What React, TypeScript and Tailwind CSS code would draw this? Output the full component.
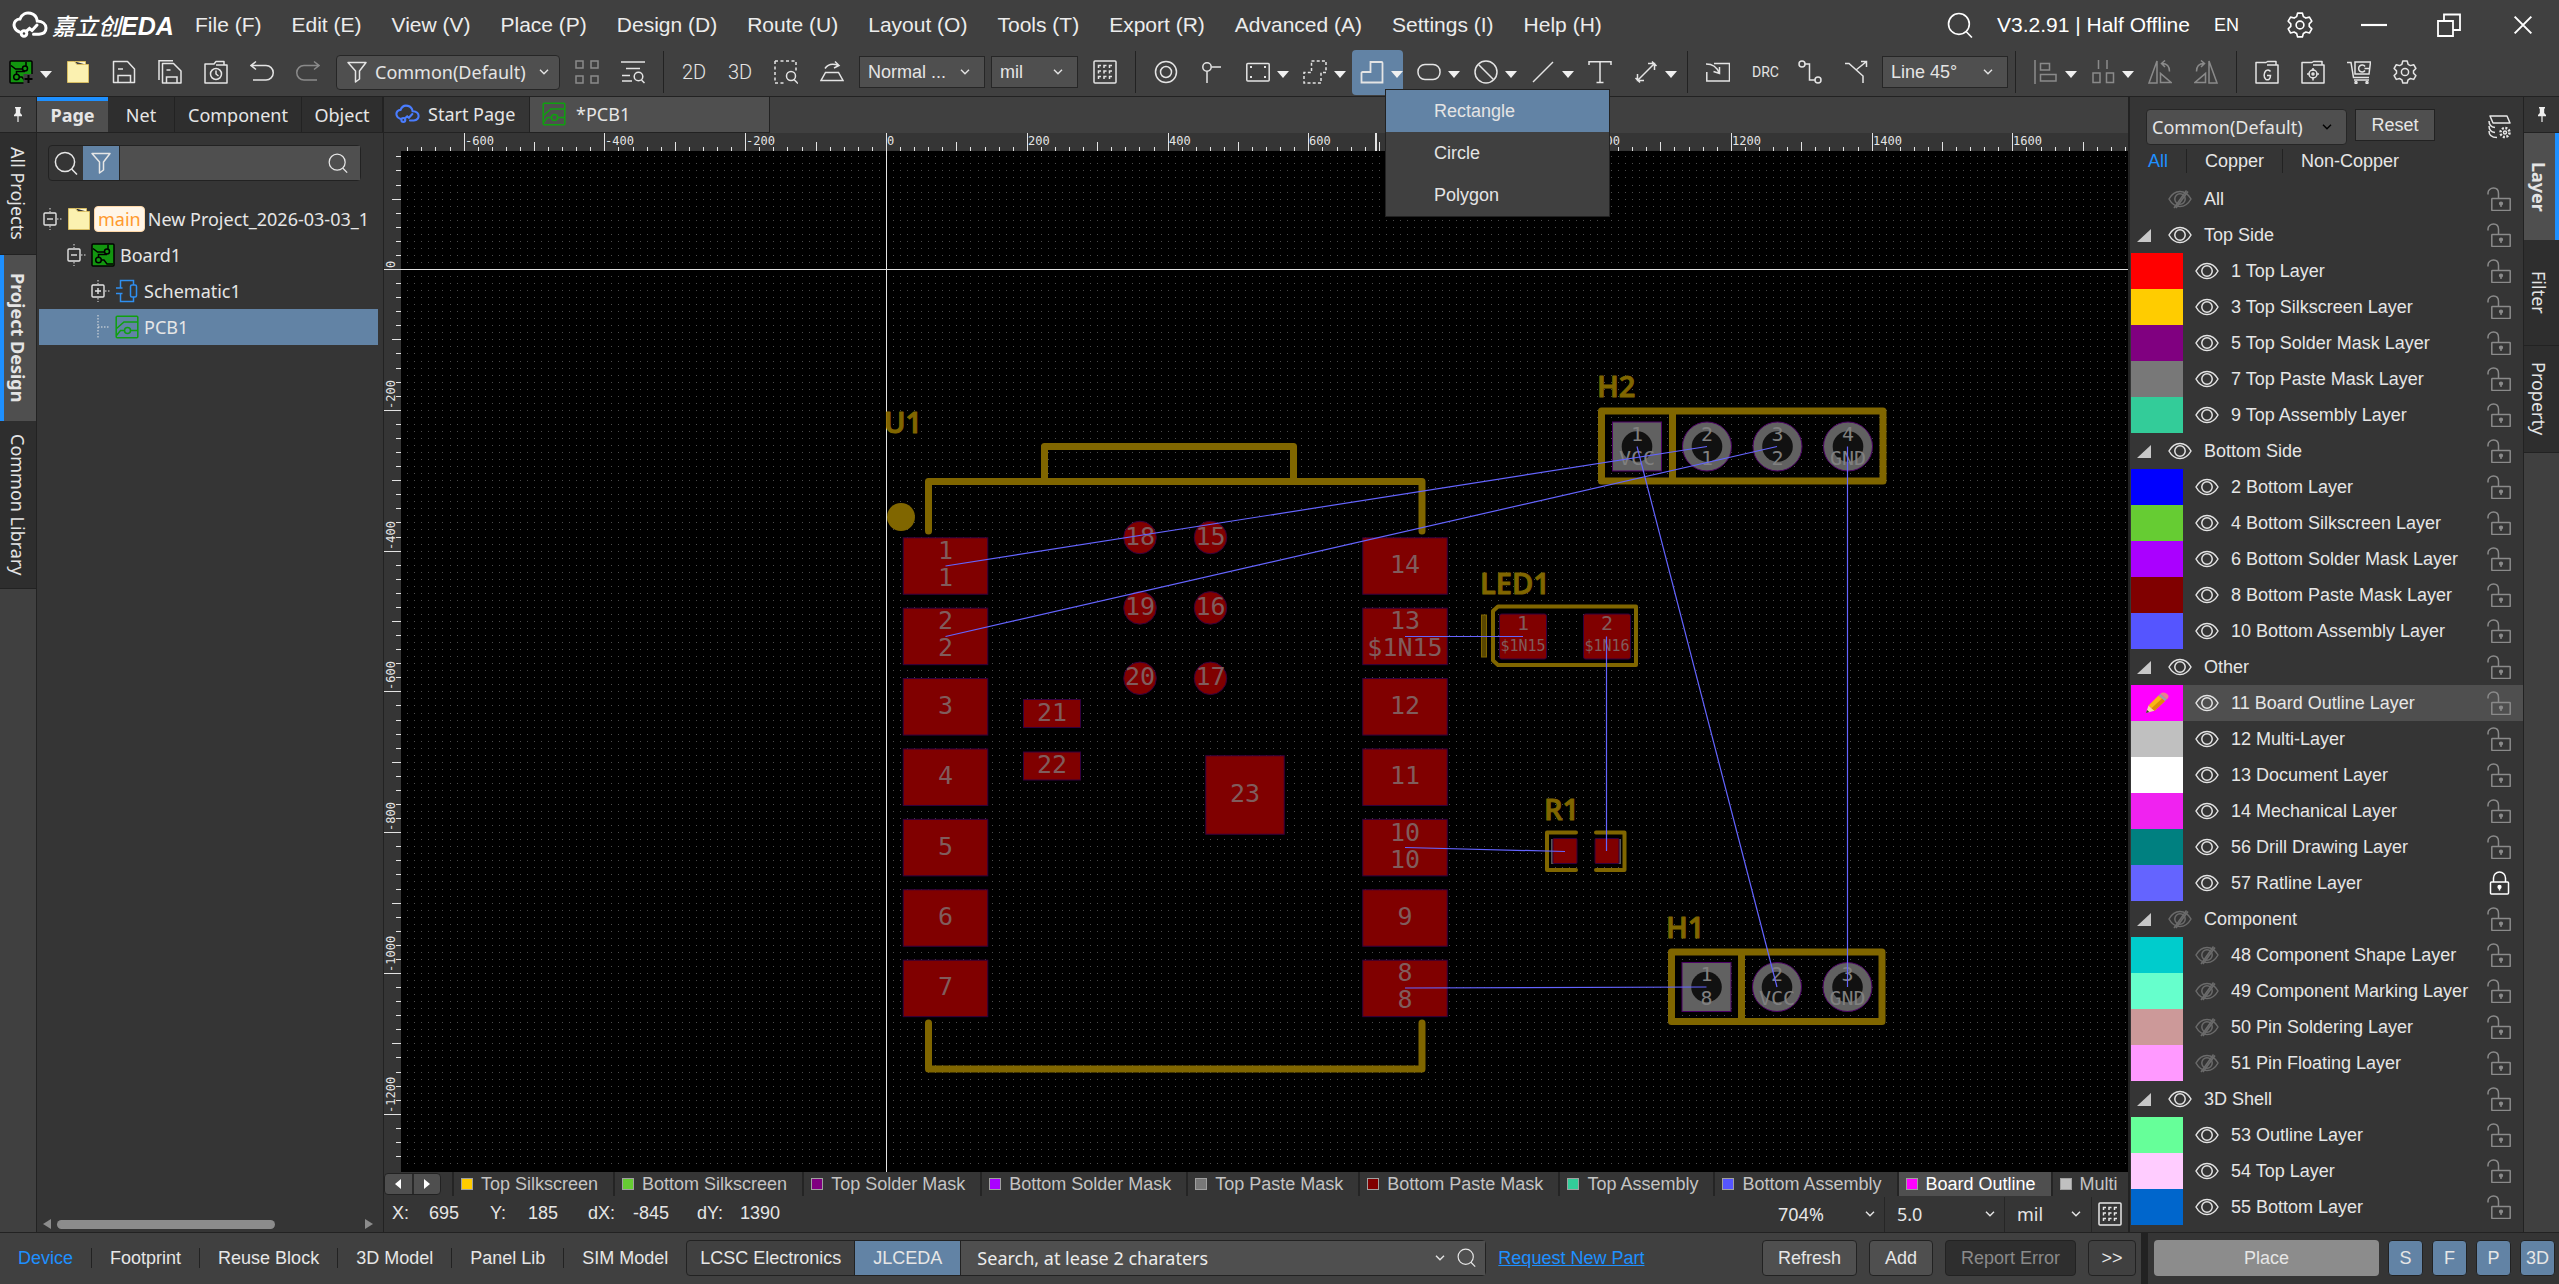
import { useState, type ReactNode } from 'react';
import { clsx, type ClassValue } from 'clsx';
import { twMerge } from 'tailwind-merge';

function cn(...inputs: ClassValue[]) {
  return twMerge(clsx(inputs));
}

const MENUS = [
  'File (F)', 'Edit (E)', 'View (V)', 'Place (P)', 'Design (D)', 'Route (U)', 'Layout (O)',
  'Tools (T)', 'Export (R)', 'Advanced (A)', 'Settings (I)', 'Help (H)',
];

type Layer = {
  name: string;
  color?: string;
  hidden?: boolean;
  locked?: boolean;
  active?: boolean;
  plain?: boolean;
};

const LAYERS: Layer[] = [
  { name: 'All', hidden: true, plain: true },
  { name: 'Top Side' },
  { name: '1 Top Layer', color: '#ff0000' },
  { name: '3 Top Silkscreen Layer', color: '#ffcc00' },
  { name: '5 Top Solder Mask Layer', color: '#800080' },
  { name: '7 Top Paste Mask Layer', color: '#787878' },
  { name: '9 Top Assembly Layer', color: '#33cc99' },
  { name: 'Bottom Side' },
  { name: '2 Bottom Layer', color: '#0000ff' },
  { name: '4 Bottom Silkscreen Layer', color: '#66cc33' },
  { name: '6 Bottom Solder Mask Layer', color: '#aa00ff' },
  { name: '8 Bottom Paste Mask Layer', color: '#800000' },
  { name: '10 Bottom Assembly Layer', color: '#5555ff' },
  { name: 'Other' },
  { name: '11 Board Outline Layer', color: '#ff00ff', active: true },
  { name: '12 Multi-Layer', color: '#c0c0c0' },
  { name: '13 Document Layer', color: '#ffffff' },
  { name: '14 Mechanical Layer', color: '#f022f0' },
  { name: '56 Drill Drawing Layer', color: '#008080' },
  { name: '57 Ratline Layer', color: '#6464ff', locked: true },
  { name: 'Component', hidden: true },
  { name: '48 Component Shape Layer', color: '#00cccc', hidden: true },
  { name: '49 Component Marking Layer', color: '#66ffcc', hidden: true },
  { name: '50 Pin Soldering Layer', color: '#cc9999', hidden: true },
  { name: '51 Pin Floating Layer', color: '#ff99ff', hidden: true },
  { name: '3D Shell' },
  { name: '53 Outline Layer', color: '#66ff99' },
  { name: '54 Top Layer', color: '#ffccff' },
  { name: '55 Bottom Layer', color: '#0066cc' },
];

const LAYER_TABS = [
  ['Top Silkscreen', '#ffcc00'],
  ['Bottom Silkscreen', '#66cc33'],
  ['Top Solder Mask', '#800080'],
  ['Bottom Solder Mask', '#aa00ff'],
  ['Top Paste Mask', '#787878'],
  ['Bottom Paste Mask', '#800000'],
  ['Top Assembly', '#33cc99'],
  ['Bottom Assembly', '#5555ff'],
  ['Board Outline', '#ff00ff'],
  ['Multi', '#c0c0c0'],
];

/* ---------- icons ---------- */

function Icon({ children, className }: { children: ReactNode; className?: string }) {
  return (
    <svg
      viewBox="0 0 24 24"
      className={cn('w-6 h-6 shrink-0', className)}
      fill="none"
      stroke="currentColor"
      strokeWidth="1.5"
    >
      {children}
    </svg>
  );
}

const Chevron = ({ className }: { className?: string }) => (
  <svg viewBox="0 0 10 6" className={cn('w-[10px] h-[6px] shrink-0 pointer-events-none', className)} fill="none" stroke="currentColor" strokeWidth="1.4">
    <path d="M1 .8l4 4 4-4" />
  </svg>
);

const Caret = () => (
  <svg viewBox="0 0 12 7" className="w-3 h-[7px] mt-1 shrink-0" fill="#f0f0f0">
    <path d="M0 0h12L6 7z" />
  </svg>
);

const Search = ({ className }: { className?: string }) => (
  <Icon className={className}>
    <circle cx="11" cy="11" r="9.6" />
    <path d="M17.6 18L23 23.5" />
  </Icon>
);

const Funnel = ({ className }: { className?: string }) => (
  <Icon className={className}>
    <path d="M3 2.5h18l-6.500 8.500v8l-4 3V11z" strokeLinejoin="round" />
  </Icon>
);

const Eye = ({ off }: { off?: boolean }) => (
  <Icon className={off ? 'text-[#6b6b6b]' : 'text-[#e4e4e4]'}>
    <path d="M1 12C4 6.6 8 4.5 12 4.5s8 2.1 11 7.5c-3 5.4-7 7.5-11 7.5S4 17.4 1 12z" />
    <circle cx="12" cy="12" r="5.2" />
    {off && <path d="M18.5 3.5L6 21M20 4.5L8 21" />}
  </Icon>
);

const Lock = ({ closed }: { closed?: boolean }) => (
  <Icon className={closed ? 'text-white' : 'text-[#8a8a8a]'}>
    {closed ? (
      <>
        <rect x="3.5" y="11" width="18" height="12" rx="1" />
        <path d="M6.5 11V7a6 6 0 0 1 12 0v4" />
        <circle cx="12.5" cy="16" r="1.4" fill="currentColor" />
        <path d="M12.5 16v3.5" />
      </>
    ) : (
      <>
        <rect x="4.8" y="11.5" width="18.4" height="12" rx=".5" />
        <path d="M11.500 11V6.500C11.500 3 9.500 1 6.500 1S1 3.200 1 6v1.500" />
        <circle cx="14" cy="16.6" r="1.4" fill="currentColor" />
        <path d="M14 16.600v3.500" />
      </>
    )}
  </Icon>
);

const CloudLogo = ({ className, width = 3 }: { className?: string; width?: number }) => (
  <svg viewBox="0 0 36 27" className={className} fill="none" stroke="currentColor" strokeWidth={width} strokeLinecap="round">
    <path d="M7.5 20.5C2.5 19 .5 13 3.500 9.500c1.200-1.400 2.800-2 4.500-2C10 2.500 14.500.8 18.500 1.800c4.200 1 6.300 4 6.800 7.700 5 .3 8.700 3 8.700 7 0 4-3 6-7 6.300h-5.500" />
    <circle cx="12" cy="22" r="2.8" />
    <path d="M14 20l3.500-3 2.500 2 5-5.500" />
  </svg>
);

const Folder = () => (
  <Icon>
    <path d="M1.5 1.500h7l2.500 3h11.500v18h-21z" fill="#fbf1b0" stroke="#d8bd62" strokeWidth="1" />
    <path d="M9 1.500h10.500v3" fill="#fdf6cd" stroke="#d8bd62" strokeWidth="1" />
  </Icon>
);

const BoardIcon = ({ plus }: { plus?: boolean }) => (
  <Icon className="text-black">
    <rect x="1" y="1" width="22" height="22" rx="1" fill="#12960f" />
    <path d="M2 5.500l4.500 3.500h7" />
    <circle cx="16" cy="8.5" r="2.5" />
    <circle cx="7.5" cy="17" r="2.8" />
    <path d="M7.500 14v-2.500H16M17 2v4M10.500 17H13l3 4h6" />
    {plus && (
      <>
        <path d="M14.500 14h10v10h-10z" fill="#404040" stroke="none" />
        <path d="M19.500 15v8M15.500 19h8" stroke="#000" strokeWidth="2" />
      </>
    )}
  </Icon>
);

const PcbIcon = ({ className }: { className?: string }) => (
  <Icon className={cn('text-[#10a010]', className)}>
    <rect x="1.2" y="1.2" width="21.6" height="21.6" rx="1" />
    <path d="M1.500 13.500L9 7h13.500" />
    <circle cx="12.5" cy="15.5" r="3" />
    <path d="M15.500 15.500h7M1.500 20.500l4-5h4" />
  </Icon>
);

const SchIcon = () => (
  <Icon className="text-[#2f8ff0]">
    <path d="M5.500 9V1.500h13V6M5.500 15v7.500h13V18M1 9h6.500M1 14.500h6.500" />
    <rect x="15.5" y="6" width="6" height="12" rx="1.5" />
  </Icon>
);

const GridIcon = () => (
  <Icon>
    <rect x="1" y="1" width="22" height="22" rx="1" />
    <path d="M5.500 8V5.500h2.500M11 8V5.500h2.500M16.500 8V5.500H19M5.500 13.500V11h2.500M11 13.500V11h2.500M16.500 13.500V11H19M5.500 19v-2.500h2.500M11 19v-2.500h2.500M16.500 19v-2.500H19" />
  </Icon>
);

const Gear = ({ className }: { className?: string }) => (
  <Icon className={className}>
    <path d="M9.800 1h4.400l.9 3.300 2.300 1.300 3.300-.9 2.200 3.800-2.400 2.400v2.400l2.400 2.300-2.200 3.800-3.300-.9-2.300 1.300-.9 3.200H9.800l-.9-3.200-2.300-1.300-3.300.9-2.200-3.800 2.400-2.300v-2.400L1.100 8.500l2.200-3.800 3.300.9 2.300-1.300z" strokeLinejoin="round" />
    <circle cx="12" cy="12" r="3.6" />
  </Icon>
);

const Pin = () => (
  <svg viewBox="0 0 10 16" className="w-[10px] h-4" fill="#eee">
    <path d="M2 0h6v1.500H7.200V6L9 8v1.200H5.600V15h-1.200V9.200H1V8l1.800-2V1.500H2z" />
  </svg>
);

const Pencil = () => (
  <svg viewBox="0 0 24 22" className="w-6 h-[22px]">
    <path d="M1 21l2.500-7.500 6 5.200z" fill="#f5d9a8" />
    <path d="M1 21l1-3 2.300 2z" fill="#333" />
    <path d="M3.500 13.500L13.500 3.500l6.500 5.500L9.500 18.700z" fill="#fbb714" />
    <path d="M6.500 16.200L17 6.400l3 2.600L9.500 18.700z" fill="#dd8a0b" />
    <path d="M13.500 3.500L15.300 1.800l6.500 5.500L20 9z" fill="#9aa3a8" />
    <path d="M15.300 1.800C17 .1 19.500 0 21.800 1.700s2.200 3.900 0 5.600z" fill="#e8808c" />
  </svg>
);

/* ---------- small controls ---------- */

function ToolButton({
  label, children, caret, active, dim,
}: {
  label: string;
  children: ReactNode;
  caret?: boolean;
  active?: boolean;
  dim?: boolean;
}) {
  return (
    <button
      aria-label={label}
      className={cn(
        'flex items-center h-[45px] mx-[3px] pl-2 shrink-0 rounded text-[#e4e4e4] hover:bg-white/10',
        caret ? 'w-[51px] gap-[7px]' : 'w-10',
        active && 'bg-[#6283a5]',
        dim && 'text-[#8a8a8a]',
      )}
    >
      {children}
      {caret && <Caret />}
    </button>
  );
}

const Separator = () => <div className="w-px h-[42px] mx-[7px] bg-[#222] shrink-0" />;

function Select({
  label, value, className, selectClass, chevronClass, icon,
}: {
  label: string;
  value: string;
  className?: string;
  selectClass?: string;
  chevronClass?: string;
  icon?: ReactNode;
}) {
  return (
    <div className={cn('relative flex items-center h-8 shrink-0 bg-[#4f4f4f] border border-[#262626]', className)}>
      {icon && <span className="pl-2 pointer-events-none">{icon}</span>}
      <select
        aria-label={label}
        className={cn('appearance-none bg-transparent w-full h-full pl-2 pr-8 outline-none text-ellipsis', selectClass)}
      >
        <option>{value}</option>
      </select>
      <Chevron className={cn('absolute right-[14px]', chevronClass)} />
    </div>
  );
}

/* ---------- title bar ---------- */

function TitleBar() {
  return (
    <header className="flex items-center h-[50px] pl-3 text-[21px] text-[#ececec]">
      <CloudLogo className="w-9 h-7 text-white" />
      <div className="flex items-baseline ml-1 w-[128px] font-bold italic text-white whitespace-nowrap">
        <span className="text-[23px] font-medium font-['Noto_Sans_CJK_SC',sans-serif]">嘉立创</span>
        <span className="text-[25px]">EDA</span>
      </div>
      <nav className="flex">
        {MENUS.map((menu) => (
          <button key={menu} className="px-[15px] h-10 whitespace-nowrap hover:bg-white/10">
            {menu}
          </button>
        ))}
      </nav>
      <div className="flex items-center ml-auto pr-[26px] text-white">
        <button aria-label="Search commands"><Search className="w-[26px] h-[26px]" /></button>
        <span className="ml-6 whitespace-nowrap">V3.2.91 | Half Offline</span>
        <button className="ml-6 text-lg">EN</button>
        <button aria-label="Preferences" className="ml-12"><Gear className="w-[26px] h-[26px]" /></button>
        <button aria-label="Minimize" className="ml-12">
          <Icon className="w-[26px] h-[26px]"><path d="M0 12h24" strokeWidth="2" /></Icon>
        </button>
        <button aria-label="Restore" className="ml-[50px]">
          <Icon><path d="M1 8h15v15H1zM7 8V1.500h16V17h-7" strokeWidth="1.8" /></Icon>
        </button>
        <button aria-label="Close" className="ml-[52px]">
          <Icon className="w-5 h-5"><path d="M2 2l20 20M22 2L2 22" strokeWidth="2.4" /></Icon>
        </button>
      </div>
    </header>
  );
}

/* ---------- toolbar ---------- */

function ShapeMenu() {
  const [selected, setSelected] = useState('Rectangle');
  return (
    <ul className="absolute left-9 top-[39px] z-10 w-[225px] border border-[#222] bg-[#404040]">
      {['Rectangle', 'Circle', 'Polygon'].map((shape) => (
        <li key={shape}>
          <button
            onClick={() => setSelected(shape)}
            className={cn('w-full h-[42px] pl-12 text-left text-lg', selected === shape && 'bg-[#6283a5]')}
          >
            {shape}
          </button>
        </li>
      ))}
    </ul>
  );
}

function Toolbar() {
  return (
    <div className="flex items-center h-[46px] pb-0.5 -ml-0.5 text-lg text-[#e4e4e4]">
      <ToolButton label="New" caret><BoardIcon plus /></ToolButton>
      <ToolButton label="Open"><Folder /></ToolButton>
      <ToolButton label="Save">
        <Icon>
          <path d="M1.500 1.500h14l7 7.500v13.500h-21z" strokeLinejoin="round" />
          <path d="M6 22v-6.500h12.500V22M6 9h5" />
        </Icon>
      </ToolButton>
      <ToolButton label="Save all">
        <Icon>
          <path d="M4.500 3.500h11l7.500 7.500v12H4.500z" strokeLinejoin="round" />
          <path d="M8.500 23v-6h10.500v6M8.500 10h4M1 20V.8h14" />
        </Icon>
      </ToolButton>
      <ToolButton label="Recent">
        <Icon>
          <path d="M1 4h9l2-2.500h8V5h3v18H1zM12 5h8" strokeLinejoin="round" />
          <circle cx="12" cy="14" r="5.5" />
          <path d="M12 10.500V14l2.500 2" />
        </Icon>
      </ToolButton>
      <ToolButton label="Undo">
        <Icon><path d="M6 1.500L1 5.500l5 4M1 5.500h15a7 7 0 0 1 0 14.500H3" /></Icon>
      </ToolButton>
      <ToolButton label="Redo" dim>
        <Icon><path d="M18 1.500l5 4-5 4M23 5.500H8A7 7 0 0 0 8 20h13" /></Icon>
      </ToolButton>
      <Select
        label="Filter preset"
        value="Common(Default)"
        icon={<Funnel />}
        className="w-[224px] h-[35px] ml-[5px] mr-1 rounded-sm font-['Noto_Sans','Open_Sans',sans-serif]"
        selectClass="pl-[6px] pr-6"
        chevronClass="right-[10px]"
      />
      <ToolButton label="Tile" dim>
        <Icon><path d="M1 1h7v7H1zM16 1h7v7h-7zM1 16h7v7H1zM16 16h7v7h-7z" /></Icon>
      </ToolButton>
      <ToolButton label="Find">
        <Icon>
          <path d="M0 2h24M5 8.500h14M1 15.500h8M1 21h10" />
          <circle cx="17.5" cy="16.5" r="4.3" />
          <path d="M20.500 20l3 3" />
        </Icon>
      </ToolButton>
      <Separator />
      <ToolButton label="2D"><span className="w-6 text-xl font-['Roboto',sans-serif] font-light">2D</span></ToolButton>
      <ToolButton label="3D"><span className="w-6 text-xl font-['Roboto',sans-serif] font-light">3D</span></ToolButton>
      <ToolButton label="Fit selection">
        <Icon>
          <path d="M1 1h21v11M1 1v22h9" strokeDasharray="3 2.5" />
          <circle cx="17" cy="16" r="4.5" />
          <path d="M20 19.500l4 4" />
        </Icon>
      </ToolButton>
      <ToolButton label="Flip board">
        <Icon><path d="M5.500 12.500h13l4.500 8H1zM5 8.500C8 4 13 3.500 18.500 5.500M15 1.500l4 4-5 2.500" /></Icon>
      </ToolButton>
      <Select label="Display mode" value="Normal ..." className="w-[126px] ml-1 mr-[6px]" />
      <Select label="Unit" value="mil" className="w-[87px] mr-1" />
      <ToolButton label="Grid"><GridIcon /></ToolButton>
      <Separator />
      <ToolButton label="Via">
        <Icon><circle cx="12" cy="12" r="10.5" /><circle cx="12" cy="12" r="5.5" /></Icon>
      </ToolButton>
      <ToolButton label="Pad">
        <Icon><circle cx="7" cy="7" r="4.2" /><path d="M11.500 7H21M7 11.500V23" /></Icon>
      </ToolButton>
      <ToolButton label="Board frame" caret>
        <Icon>
          <rect x="0.8" y="3.5" width="22.4" height="17.5" rx="1" />
          <path d="M4 7h2M18 7h2M4 17h2M18 17h2" strokeWidth="2" />
        </Icon>
      </ToolButton>
      <ToolButton label="Region" caret>
        <Icon><path d="M8.500 1h14.500v11.500h-5V23H1V12.500h7.500z" strokeDasharray="3 2.2" /></Icon>
      </ToolButton>
      <div className="relative">
        <ToolButton label="Filled region" caret active>
          <Icon><path d="M10.500 2h11a1 1 0 0 1 1 1v19.500h-21V13a1 1 0 0 1 1-1h8z" strokeWidth="1.8" /></Icon>
        </ToolButton>
        <ShapeMenu />
      </div>
      <ToolButton label="Slot" caret>
        <Icon><rect x="1" y="4.5" width="22" height="15" rx="7" /></Icon>
      </ToolButton>
      <ToolButton label="Prohibited region" caret>
        <Icon><circle cx="12" cy="12" r="11" /><path d="M4.500 4.500l15 15" /></Icon>
      </ToolButton>
      <ToolButton label="Line" caret>
        <Icon><path d="M2 22L22 2" /></Icon>
      </ToolButton>
      <ToolButton label="Text">
        <Icon><path d="M1 5V1.800h22V5M12 2v20.500M8.500 22.500h7" /></Icon>
      </ToolButton>
      <ToolButton label="Dimension" caret>
        <Icon><path d="M4 20L20 4M3.500 14v6.500H10M14 3.500h6.500V10M1.500 18l4.500 4.500M18 1.500L22.500 6" /></Icon>
      </ToolButton>
      <Separator />
      <ToolButton label="Import changes">
        <Icon><path d="M8 3.500h15.500v17.500H.8V12M0 4c6 0 11 3 13 9M13.500 7v6.500L7.500 11.500" /></Icon>
      </ToolButton>
      <ToolButton label="Design rule check">
        <span className="w-6 text-sm font-['Roboto',sans-serif]">DRC</span>
      </ToolButton>
      <ToolButton label="Single route">
        <Icon><circle cx="4" cy="4" r="3" /><circle cx="20" cy="20" r="3" /><path d="M7 4h4.500v16H17" /></Icon>
      </ToolButton>
      <ToolButton label="Fan out">
        <Icon><path d="M1 3.500h4L19 16v7M12 10L22.500 1.500M17 1.500h5.500V7" /></Icon>
      </ToolButton>
      <Select label="Routing corner" value="Line 45°" className="w-[126px] ml-[3px]" />
      <Separator />
      <ToolButton label="Align" caret dim>
        <Icon><path d="M1 0v24M6.500 3.500h9v6.500h-9zM6.500 14.500H22V21H6.500z" /></Icon>
      </ToolButton>
      <ToolButton label="Distribute" caret dim>
        <Icon><path d="M7.500 0v9M16 0v9M2 13h7v9.500H2zM15.500 13h7v9.500h-7z" /></Icon>
      </ToolButton>
      <ToolButton label="Rotate left" dim>
        <Icon><path d="M9 1v22H1zM12.500 22.500H23l-10.500-9zM14 3.500c5 0 7.500 3 7.500 8M17 .5l-3.500 3L17 7" /></Icon>
      </ToolButton>
      <ToolButton label="Rotate right" dim>
        <Icon><path d="M15 1v22h8zM11.500 22.500H1l10.500-9zM10 3.500c-5 0-7.500 3-7.500 8M7 .5l3.500 3L7 7" /></Icon>
      </ToolButton>
      <Separator />
      <ToolButton label="Gerber export">
        <Icon>
          <path d="M1 2.500h10l1.500-1h8.500V5h2v18H1zM12 5h9" strokeLinejoin="round" />
          <path d="M15.500 11.500c-1-1.500-3-1.800-4.500-.8-2.500 2-2.500 7.500 0 8.800 2 .8 4.500 0 4.500-4H12" />
        </Icon>
      </ToolButton>
      <ToolButton label="Pick and place export">
        <Icon>
          <path d="M1 2.500h10l1.500-1h8.500V5h2v18H1zM12 5h9" strokeLinejoin="round" />
          <circle cx="12" cy="14" r="4" />
          <circle cx="12" cy="14" r="1" />
          <path d="M12 8v3M12 17v3.500M6 14h2.500M15.500 14H18" />
        </Icon>
      </ToolButton>
      <ToolButton label="Order">
        <Icon>
          <path d="M0 2.500h4L6.500 17.500H22M7 20h15M8 2h15.500L22 14H8z" />
          <path d="M18 6.500a3.500 3.500 0 1 0 0 4M17.500 8.500H22" />
          <circle cx="9" cy="22.5" r="1" /><circle cx="20" cy="22.5" r="1" />
        </Icon>
      </ToolButton>
      <ToolButton label="Toolbar settings"><Gear /></ToolButton>
    </div>
  );
}

/* ---------- left side ---------- */

function SideTab({ children, side, active, className }: { children: ReactNode; side: 'left' | 'right'; active?: boolean; className?: string }) {
  return (
    <button
      className={cn(
        'w-full shrink-0 flex items-center justify-center border-b border-[#222] bg-[#2e2e2e] text-[#e4e4e4]',
        side === 'right' && 'pr-[5px]',
        active && 'bg-[#4f4f4f] font-bold border-[#1e90ff] border-b-0',
        active && (side === 'left' ? 'border-l-4 pr-1' : 'border-r-4 pr-px'),
        className,
      )}
    >
      <span className="[writing-mode:vertical-rl] whitespace-nowrap">{children}</span>
    </button>
  );
}

function TreeRow({ indent, open, icon, children, selected }: {
  indent: string;
  open?: boolean;
  icon: ReactNode;
  children: ReactNode;
  selected?: boolean;
}) {
  return (
    <li className={cn('flex items-center h-9 whitespace-nowrap', indent, selected && 'bg-[#6283a5]')}>
      <svg viewBox="0 0 21 24" className="w-[21px] h-6 mr-[3px] shrink-0" fill="none" stroke="#e4e4e4" strokeWidth="1.4">
        {open === undefined ? (
          <path d="M7 0v24M7 12h12" strokeDasharray="1.5 1.5" strokeWidth="1" />
        ) : (
          <>
            <rect x="1" y="6" width="12" height="12" rx="1" />
            <path d={open ? 'M4 12h6' : 'M4 12h6M7 9v6'} />
            <path d="M7 1v4M7 19v4M14 12h6" strokeDasharray="1.5 1.5" strokeWidth="1" />
          </>
        )}
      </svg>
      {icon}
      {children}
    </li>
  );
}

function ProjectPanel() {
  const [tab, setTab] = useState('Page');
  return (
    <section className="flex flex-col w-[348px] shrink-0 overflow-hidden border-x border-[#222] bg-[#353535]">
      <div className="flex h-9 shrink-0 border-b border-[#222]">
        {[
          ['Page', 'w-[71px]'],
          ['Net', 'w-[67px]'],
          ['Component', 'w-[127px]'],
          ['Object', 'flex-1'],
        ].map(([name, width]) => (
          <button
            key={name}
            onClick={() => setTab(name)}
            className={cn(
              'border-r border-[#222] bg-[#2e2e2e]',
              width,
              tab === name && 'border-t-4 border-t-[#1e90ff] border-r-0 bg-[#4f4f4f] pb-1 font-bold',
            )}
          >
            {name}
          </button>
        ))}
      </div>
      <div className="flex h-9 mt-3 ml-[11px] mr-[22px] rounded-sm border border-[#222]">
        <button aria-label="Find" className="w-[34px] flex items-center justify-center"><Search /></button>
        <button aria-label="Filter" className="w-9 flex items-center justify-center bg-[#6283a5]"><Funnel /></button>
        <label className="flex flex-1 items-center min-w-0 pr-3 border-l border-[#262626] bg-[#4f4f4f]">
          <input aria-label="Search pages" className="flex-1 min-w-0 h-full px-2 bg-transparent outline-none" />
          <Search className="w-5 h-5" />
        </label>
      </div>
      <ul className="mt-5 pl-[2px] pr-[5px]">
        <TreeRow indent="pl-1" open icon={<Folder />}>
          <span className="ml-[3px] mr-[3px] px-[3px] rounded-sm border border-[#ffd8a8] bg-[#fff6e8] leading-6 text-[#ff9a2e]">main</span>
          New Project_2026-03-03_1
        </TreeRow>
        <TreeRow indent="pl-7" open icon={<BoardIcon />}>
          <span className="ml-[5px]">Board1</span>
        </TreeRow>
        <TreeRow indent="pl-[52px]" open={false} icon={<SchIcon />}>
          <span className="ml-[5px]">Schematic1</span>
        </TreeRow>
        <TreeRow indent="pl-[52px]" selected icon={<PcbIcon />}>
          <span className="ml-[5px]">PCB1</span>
        </TreeRow>
      </ul>
      <div className="flex items-center mt-auto mb-[3px] pl-[6px] pr-[10px] gap-[6px]">
        <svg viewBox="0 0 8 10" className="w-2 h-[10px]" fill="#8c8c8c"><path d="M8 0v10L0 5z" /></svg>
        <div className="flex-1"><div className="w-[218px] h-[9px] rounded-full bg-[#8c8c8c]" /></div>
        <svg viewBox="0 0 8 10" className="w-2 h-[10px]" fill="#8c8c8c"><path d="M0 0v10l8-5z" /></svg>
      </div>
    </section>
  );
}

/* ---------- board canvas ---------- */

// Canvas is 7.04 px per 10 mil; the board origin sits at (502, 136) of the drawing area.
const SCALE = 0.704;
const OX = 502;
const OY = 136;
const RULER = 18;

const SILK = '#806600';
const COPPER = '#800000';
const MASK = '#32003c';

function dotGrid() {
  let d = '';
  for (let j = -16; j < 128; j++) {
    const y = Math.round(OY + j * 10 * SCALE);
    for (let i = -69; i < 177; i++) {
      d += `M${Math.round(OX + i * 10 * SCALE)} ${y}h1v1h-1z`;
    }
  }
  return d;
}

const DOTS = dotGrid();

function PadText({ x, y, lines, size = 25, color = '#805c5c' }: {
  x: number;
  y: number;
  lines: string[];
  size?: number;
  color?: string;
}) {
  const big = size > 20;
  return (
    <g fill={color} fontSize={size} textAnchor="middle">
      {lines.length === 1 ? (
        <text x={x} y={y + 7}>{lines[0]}</text>
      ) : (
        <>
          <text x={x} y={y - (big ? 7 : 6)}>{lines[0]}</text>
          <text x={x} y={y + (big ? 20 : 18)}>{lines[1]}</text>
        </>
      )}
    </g>
  );
}

function Pad({ x, y, w, h, lines = [], rx = 0 }: { x: number; y: number; w: number; h: number; lines?: string[]; rx?: number }) {
  return (
    <g>
      <rect x={x - w / 2} y={y - h / 2} width={w} height={h} rx={rx} fill={COPPER} stroke={MASK} />
      {lines.length > 0 && <PadText x={x} y={y} lines={lines} />}
    </g>
  );
}

function HolePad({ x, y, square, lines }: { x: number; y: number; square?: boolean; lines: string[] }) {
  return (
    <g>
      {square ? (
        <rect x={x - 24.5} y={y - 24.5} width="49" height="49" fill="#616161" stroke="#4d0066" />
      ) : (
        <circle cx={x} cy={y} r="24.5" fill="#616161" stroke="#4d0066" />
      )}
      <circle cx={x} cy={y} r="15.3" fill="#111" />
      <PadText x={x} y={y} lines={lines} size={20} color="#808080" />
    </g>
  );
}

const LEFT_PADS = [['1', '1'], ['2', '2'], ['3'], ['4'], ['5'], ['6'], ['7']];
const RIGHT_PADS = [['14'], ['13', '$1N15'], ['12'], ['11'], ['10', '10'], ['9'], ['8', '8']];

const RATLINES = [
  [59.5, 297, 821, 177.5],
  [59.5, 367.5, 891, 177.5],
  [751, 177.5, 891, 718],
  [961.5, 177.5, 961.5, 718],
  [519, 367.5, 637, 367.5],
  [720.5, 367.5, 720.5, 582],
  [519, 578.5, 679, 582.5],
  [519, 719, 820.5, 718],
];

function Board() {
  return (
    <g transform={`translate(${OX} ${OY})`}>
      <g fill="none" stroke={SILK} strokeWidth="7" strokeLinecap="round" strokeLinejoin="round">
        <path d="M42.500 262V212.500H536V262M158.500 212.500v-35h249v35M42.500 754v46H536v-46" />
        <path d="M715.500 142H997v70H715.500zM786.500 142v70" />
        <path d="M785.500 683H996v69.500H785.500zM855.500 683v69.500" />
        <g strokeWidth="4">
          <path d="M612 337.500h138v58.500H612l-5-4.500v-49.500z" />
          <path d="M690 563.500h-29V601h29M710 563.500h28.500V601H710" />
        </g>
      </g>
      <rect x="595.5" y="346" width="5" height="42" fill="#594700" stroke={SILK} />
      <circle cx="15" cy="248" r="14" fill={SILK} />

      {LEFT_PADS.map((lines, i) => (
        <Pad key={i} x={59.5} y={297 + i * 70.4} w={84.5} h={56.5} lines={lines} />
      ))}
      {RIGHT_PADS.map((lines, i) => (
        <Pad key={i} x={519} y={297 + i * 70.4} w={84.5} h={56.5} lines={lines} />
      ))}
      {['18', '19', '20', '15', '16', '17'].map((name, i) => {
        const x = i < 3 ? 254 : 324.5;
        const y = 268.5 + (i % 3) * 70.4;
        return (
          <g key={name}>
            <circle cx={x} cy={y} r="16.3" fill={COPPER} stroke={MASK} />
            <PadText x={x} y={y} lines={[name]} />
          </g>
        );
      })}
      <Pad x={166} y={444.5} w={57} h={28} lines={['21']} />
      <Pad x={166} y={497} w={57} h={28} lines={['22']} />
      <Pad x={359} y={526} w={78.5} h={78.5} lines={['23']} />

      <Pad x={637} y={367.5} w={47} h={45} rx={2} />
      <Pad x={721} y={367.5} w={47} h={45} rx={2} />
      <g fill="#805c5c" textAnchor="middle" fontSize="20">
        <text x="637" y="361">1</text>
        <text x="721" y="361">2</text>
        <g fontSize="15">
          <text x="637" y="382">$1N15</text>
          <text x="721" y="382">$1N16</text>
        </g>
      </g>
      <rect x="665" y="570" width="24" height="25" fill="#555" />
      <rect x="711" y="570" width="24" height="25" fill="#555" />
      <Pad x={679} y={582} w={24} h={25} rx={1} />
      <Pad x={721} y={582} w={24} h={25} rx={1} />

      <HolePad x={751} y={177.5} square lines={['1', 'VCC']} />
      <HolePad x={821} y={177.5} lines={['2', '1']} />
      <HolePad x={891.5} y={177.5} lines={['3', '2']} />
      <HolePad x={962} y={177.5} lines={['4', 'GND']} />
      <HolePad x={820.5} y={718} square lines={['1', '8']} />
      <HolePad x={891} y={718} lines={['2', 'VCC']} />
      <HolePad x={961.5} y={718} lines={['3', 'GND']} />

      <g stroke="#6464ff" strokeWidth="1.2">
        {RATLINES.map(([x1, y1, x2, y2], i) => (
          <line key={i} x1={x1} y1={y1} x2={x2} y2={y2} />
        ))}
      </g>

      <g fill={SILK} stroke={SILK} strokeLinejoin="round" className="text-[29px] font-semibold font-['Open_Sans',sans-serif]">
        <text x="-2" y="164">U1</text>
        <text x="711" y="128">H2</text>
        <text x="594" y="325">LED1</text>
        <text x="658" y="551">R1</text>
        <text x="780" y="669">H1</text>
      </g>
    </g>
  );
}

function Rulers() {
  const top: ReactNode[] = [];
  const left: ReactNode[] = [];
  // one tick per 20 mil, longer at 100 and full height with a label at 200
  for (let i = -34; i < 90; i++) {
    const x = Math.round(OX + i * 20 * SCALE);
    const size = i % 10 === 0 ? 18 : i % 5 === 0 ? 9 : 4;
    top.push(<rect key={i} x={x} y={RULER - size} width="1" height={size} />);
    if (i % 10 === 0) top.push(<text key={`t${i}`} x={x + 1} y="12">{i * 20}</text>);
  }
  for (let i = -8; i < 64; i++) {
    const y = Math.round(OY + i * 20 * SCALE);
    const size = i % 10 === 0 ? 17 : i % 5 === 0 ? 9 : 5;
    left.push(<rect key={i} x={17 - size} y={y} width={size} height="1" />);
    if (i % 10 === 0) {
      left.push(<text key={`t${i}`} transform={`translate(11 ${y - 1}) rotate(-90)`}>{i === 0 ? 0 : -i * 20}</text>);
    }
  }
  return (
    <g fill="#e4e4e4" fontSize="12">
      <rect width="100%" height={RULER} fill="#353535" />
      <rect width="17" height="100%" fill="#353535" />
      {top}
      {left}
      <rect x={OX + 489} y="0" width="2" height={RULER} />
      <rect x={OX} y="0" width="1" height="100%" />
      <rect x="0" y={OY} width="100%" height="1" />
    </g>
  );
}

function Canvas() {
  return (
    <div className="flex-1 min-h-0 min-w-0 bg-black overflow-hidden">
      <svg className="block w-full h-full font-['DejaVu_Sans_Mono',monospace]">
        <path d={DOTS} fill="#4c4c4c" shapeRendering="crispEdges" />
        <Rulers />
        <Board />
      </svg>
    </div>
  );
}

function Editor() {
  const [layer, setLayer] = useState('Board Outline');
  return (
    <main className="flex flex-col flex-1 min-w-0 bg-[#353535]">
      <div className="flex h-9 shrink-0 bg-[#404040] font-['Noto_Sans','Open_Sans',sans-serif]">
        <button className="flex items-center w-[145px] pl-[11px] pb-0.5 gap-2 bg-[#353535] border-b border-[#222] whitespace-nowrap">
          <CloudLogo className="w-[25px] h-5 text-[#4a7dff]" />
          Start Page
        </button>
        <button className="flex items-center w-[241px] pl-3 pb-0.5 gap-2.5 bg-[#4f4f4f] border-x border-b border-[#222]">
          <PcbIcon />
          *PCB1
        </button>
      </div>
      <Canvas />
      <div className="flex h-6 shrink-0 overflow-hidden">
        <div className="flex w-[57px] shrink-0 mr-[11px] my-px rounded-sm border border-[#222] bg-[#4f4f4f]">
          <button aria-label="Previous layers" className="flex-1 flex items-center justify-center border-r-2 border-[#2a2a2a]">
            <svg viewBox="0 0 6 10" className="w-[6px] h-[10px]" fill="#fff"><path d="M6 0v10L0 5z" /></svg>
          </button>
          <button aria-label="Next layers" className="flex-1 flex items-center justify-center">
            <svg viewBox="0 0 6 10" className="w-[6px] h-[10px]" fill="#fff"><path d="M0 0v10l6-5z" /></svg>
          </button>
        </div>
        {LAYER_TABS.map(([name, color]) => (
          <button
            key={name}
            onClick={() => setLayer(name)}
            className={cn(
              'flex items-center shrink-0 gap-2 pl-[7px] pr-[15px] border-l-2 border-[#242424] text-[#c4c4c4] whitespace-nowrap',
              layer === name && 'bg-[#4f4f4f] text-white',
            )}
          >
            <span className="w-3 h-3 border border-[#a0a0a0]" style={{ backgroundColor: color }} />
            {name}
          </button>
        ))}
      </div>
      <div className="flex items-center h-9 shrink-0 pl-2">
        <dl className="flex mb-0.5">
          {[
            ['X:', '695', 'w-[37px]', 'w-[61px]'],
            ['Y:', '185', 'w-[38px]', 'w-[60px]'],
            ['dX:', '-845', 'w-[45px]', 'w-[64px]'],
            ['dY:', '1390', 'w-[43px]', 'w-[64px]'],
          ].map(([key, value, keyWidth, valueWidth]) => (
            <div key={key} className="flex">
              <dt className={keyWidth}>{key}</dt>
              <dd className={valueWidth}>{value}</dd>
            </div>
          ))}
        </dl>
        <div className="flex items-center ml-auto h-full font-['Noto_Sans','Open_Sans',sans-serif]">
          <Select label="Zoom" value="704%" className="w-[119px] h-[35px] bg-transparent border-0 border-r" selectClass="pl-3" chevronClass="right-[9px]" />
          <Select label="Grid size" value="5.0" className="w-[120px] h-[35px] bg-transparent border-0 border-r" selectClass="pl-3" chevronClass="right-[9px]" />
          <Select label="Grid unit" value="mil" className="w-[87px] h-[35px] bg-transparent border-0 border-r" selectClass="pl-3" chevronClass="right-[10px]" />
          <button aria-label="Grid settings" className="px-[6px]"><GridIcon /></button>
        </div>
      </div>
    </main>
  );
}

/* ---------- layer panel ---------- */

function LayerRow({ layer }: { layer: Layer }) {
  return (
    <li className={cn('flex items-center h-9 pr-3', layer.active && 'bg-[#4f4f4f]')}>
      {layer.color ? (
        <span className="flex items-center justify-center w-[52px] h-full mr-3 shrink-0" style={{ backgroundColor: layer.color }}>
          {layer.active && <Pencil />}
        </span>
      ) : (
        <span className="w-[37px] pl-[6px] shrink-0">
          {!layer.plain && (
            <svg viewBox="0 0 14 13" className="w-[14px] h-[13px]" fill="#c8c8c8"><path d="M14 0v13H0z" /></svg>
          )}
        </span>
      )}
      <button aria-label={`Toggle ${layer.name}`}><Eye off={layer.hidden} /></button>
      <span className="flex-1 ml-3 whitespace-nowrap">{layer.name}</span>
      <button aria-label={`Lock ${layer.name}`}><Lock closed={layer.locked} /></button>
    </li>
  );
}

function LayerPanel() {
  const [filter, setFilter] = useState('All');
  return (
    <aside className="flex flex-col w-[396px] shrink-0 border-l-2 border-r border-[#222] bg-[#353535]">
      <div className="flex items-center h-12 pl-4 pt-3 shrink-0">
        <Select
          label="Layer preset"
          value="Common(Default)"
          className="w-[201px] h-9 rounded-sm font-['Noto_Sans','Open_Sans',sans-serif]"
          selectClass="pl-[5px]"
          chevronClass="text-black"
        />
        <button className="w-20 h-8 ml-2 mb-1 border border-[#222] bg-[#4f4f4f]">Reset</button>
        <button aria-label="Layer manager" className="ml-auto mr-3">
          <Icon>
            <path d="M3 1h17l3 7H6z" strokeLinejoin="round" />
            <path d="M2 6c0 4 2 6 6 6.500M2 11c0 4 2 6 6 6.500M2 16c0 4 3 6.500 8 6.500" />
            <circle cx="18" cy="17.5" r="4.5" strokeDasharray="2 1.5" strokeWidth="2.5" />
            <circle cx="18" cy="17.5" r="1.5" />
          </Icon>
        </button>
      </div>
      <div className="flex items-center h-9 shrink-0 pb-1">
        {['All', 'Copper', 'Non-Copper'].map((name, i) => (
          <button
            key={name}
            onClick={() => setFilter(name)}
            className={cn('h-6 px-[18px] leading-6', i > 0 && 'border-l border-[#222]', filter === name && 'text-[#1e90ff]')}
          >
            {name}
          </button>
        ))}
      </div>
      <ul className="pl-px mb-[7px]">
        {LAYERS.map((layer) => (
          <LayerRow key={layer.name} layer={layer} />
        ))}
      </ul>
    </aside>
  );
}

/* ---------- footer ---------- */

function Footer() {
  const button = 'h-9 rounded-sm border border-[#222] bg-[#4f4f4f]';
  return (
    <footer className="flex h-[52px] shrink-0 border-t border-[#222] text-lg">
      <div className="flex flex-1 items-center min-w-0 pr-[5px] pb-0.5 bg-[#404040] whitespace-nowrap">
        {['Device', 'Footprint', 'Reuse Block', '3D Model', 'Panel Lib', 'SIM Model'].map((name, i) => (
          <button
            key={name}
            className={cn('h-5 px-[18px] leading-5', i > 0 && 'border-l border-[#222]', i === 0 && 'text-[#1e90ff]')}
          >
            {name}
          </button>
        ))}
        <div className="flex h-9 rounded-sm border border-[#222]">
          <button className="px-[13px]">LCSC Electronics</button>
          <button className="px-[18px] border-x border-[#222] bg-[#6283a5]">JLCEDA</button>
          <label className="flex items-center w-[524px] pl-4 pr-[9px] gap-3 bg-[#4f4f4f]">
            <input
              aria-label="Search library"
              placeholder="Search, at lease 2 charaters"
              className="flex-1 h-full min-w-0 bg-transparent outline-none placeholder-[#ececec] font-['Noto_Sans','Open_Sans',sans-serif]"
            />
            <Chevron />
            <Search className="w-[19px] h-[19px]" />
          </label>
        </div>
        <a href="#request" className="ml-3 text-[#1e90ff] underline">Request New Part</a>
        <div className="flex gap-3 ml-auto">
          <button className={cn(button, 'w-[95px]')}>Refresh</button>
          <button className={cn(button, 'w-16')}>Add</button>
          <button className={cn(button, 'w-[131px] bg-[#2e2e2e] text-[#8a8a8a]')} disabled>Report Error</button>
          <button className={cn(button, 'w-12 bg-[#404040]')}>&gt;&gt;</button>
        </div>
      </div>
      <div className="flex items-center w-[418px] shrink-0 pl-[6px] pr-1 pb-0.5 gap-[9px] border-l-[7px] border-[#222] bg-[#353535]">
        <button className="flex-1 h-9 rounded-sm bg-[#8c8c8c]">Place</button>
        {['S', 'F', 'P', '3D'].map((name) => (
          <button key={name} className={cn(button, 'w-[35px] bg-[#6283a5]')}>{name}</button>
        ))}
      </div>
    </footer>
  );
}

export default function App() {
  return (
    <div className="flex flex-col min-h-screen overflow-hidden bg-[#404040] text-lg leading-6 text-[#e6e6e6] font-['Liberation_Sans',Arial,sans-serif]">
      <TitleBar />
      <Toolbar />
      <div className="flex flex-1 border-t border-[#222]">
        <nav className="flex flex-col w-9 shrink-0 font-['Noto_Sans','Open_Sans',sans-serif]">
          <button aria-label="Pin panel" className="flex items-center justify-center h-9 border-b border-[#222]"><Pin /></button>
          <SideTab side="left" className="h-[122px]">All Projects</SideTab>
          <SideTab side="left" active className="h-[166px]">Project Design</SideTab>
          <SideTab side="left" className="h-[168px]">Common Library</SideTab>
        </nav>
        <div className="flex font-['Noto_Sans','Open_Sans',sans-serif]">
          <ProjectPanel />
        </div>
        <Editor />
        <LayerPanel />
        <nav className="flex flex-col w-[35px] shrink-0 font-['Noto_Sans','Open_Sans',sans-serif]">
          <button aria-label="Pin panel" className="flex items-center justify-center h-9 border-b border-[#222] bg-[#353535]"><Pin /></button>
          <SideTab side="right" active className="h-[107px]">Layer</SideTab>
          <SideTab side="right" className="h-[106px]">Filter</SideTab>
          <SideTab side="right" className="h-[107px]">Property</SideTab>
        </nav>
      </div>
      <Footer />
    </div>
  );
}
